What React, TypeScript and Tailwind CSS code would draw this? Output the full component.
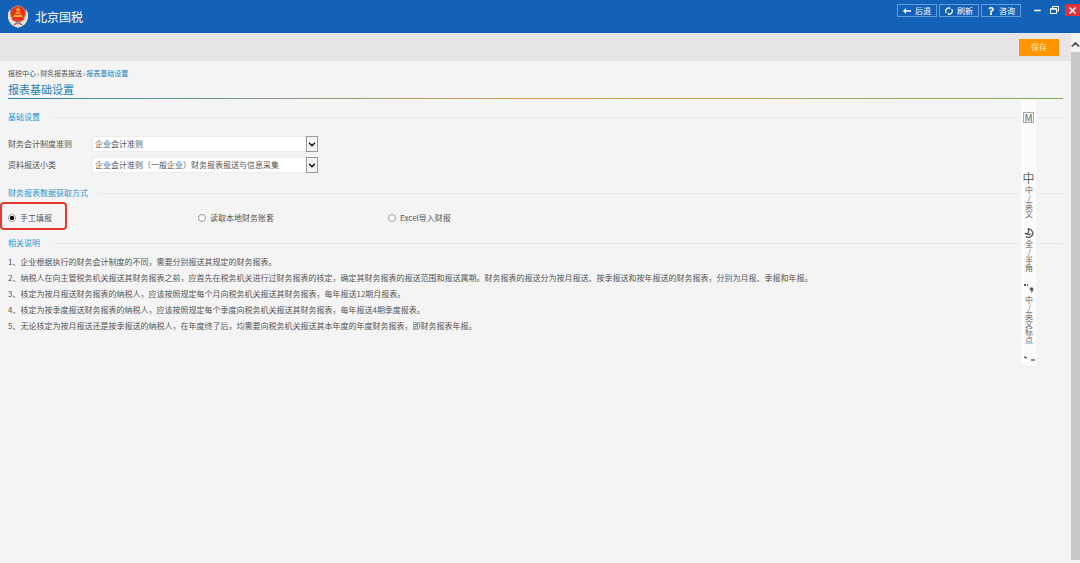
import type { ReactNode } from "react";
import { FaQuestion } from "react-icons/fa";
import { FiChevronDown, FiChevronUp, FiX } from "react-icons/fi";
import { LuMinus } from "react-icons/lu";

const notes = [
  "1、企业根据执行的财务会计制度的不同，需要分别报送其规定的财务报表。",
  "2、纳税人在向主管税务机关报送其财务报表之前，应首先在税务机关进行过财务报表的核定，确定其财务报表的报送范围和报送属期。财务报表的报送分为按月报送、按季报送和按年报送的财务报表，分别为月报、季报和年报。",
  "3、核定为按月报送财务报表的纳税人，应该按照规定每个月向税务机关报送其财务报表，每年报送12期月报表。",
  "4、核定为按季度报送财务报表的纳税人，应该按照规定每个季度向税务机关报送其财务报表，每年报送4期季度报表。",
  "5、无论核定为按月报送还是按季报送的纳税人，在年度终了后，均需要向税务机关报送其本年度的年度财务报表，即财务报表年报。",
];

function Emblem() {
  return (
    <svg viewBox="0 0 22 24" className="h-6 w-[22px]">
      <path d="M3 4C0 9 0 16 5 20l6 3 6-3c5-4 5-11 2-16-2 10-4 12-8 12S4 13 3 4z" fill="#d9cdb8" />
      <path d="M2 7c-1 6 1 10 5 12M20 7c1 6-1 10-5 12M4 18l4 3h6l4-3" fill="none" stroke="#f4eee4" strokeWidth="1.2" />
      <circle cx="11" cy="8.5" r="7.6" fill="#e8301c" stroke="#c9a27a" strokeWidth="0.8" />
      <path d="M11 2l.8 1.700 1.900.2-1.400 1.200.4 1.800L11 6l-1.700.9.4-1.800-1.400-1.200 1.900-.2zM6 12h10l-1-2H7zM8 9h6l-1-1.500H9z" fill="#ffb02e" />
      <path d="M4 14l4 3h6l4-3-1 5-4 3H9l-4-3z" fill="#e9e0d2" />
      <path d="M5 14l6 3 6-3M7 20l4-3 4 3" fill="none" stroke="#d8402c" strokeWidth="1.4" />
      <circle cx="11" cy="18" r="1.6" fill="#7f93b8" />
    </svg>
  );
}

function BackIcon() {
  return (
    <svg viewBox="0 0 8 8" className="h-2 w-2" fill="currentColor">
      <path d="M0 4l3-3v2.200h5v1.600H3V7z" />
    </svg>
  );
}

function RefreshIcon() {
  return (
    <svg viewBox="0 0 8 8" className="h-2 w-2" fill="none" stroke="currentColor" strokeWidth="1.2">
      <path d="M1.400 5.800A3 3 0 0 1 4.800 1.100M6.600 2.200A3 3 0 0 1 3.200 6.900" />
      <path d="M4 0l1.600 1.300L4.300 2.600zM4 8L2.400 6.700l1.300-1.300z" fill="currentColor" stroke="none" />
    </svg>
  );
}

function HeaderButton({ icon, label }: { icon: ReactNode; label: string }) {
  return (
    <button className="flex h-[13px] w-10 items-center justify-center gap-1 border border-[#5f9ce0] text-[8px] leading-none">
      {icon}
      {label}
    </button>
  );
}

function SectionTitle({ title }: { title: string }) {
  return (
    <div className="flex h-3 items-center gap-3">
      <h2 className="text-[8px] text-[#2b94d2]">{title}</h2>
      <div className="h-px flex-1 bg-[#e8e9ea]" />
    </div>
  );
}

function SelectRow({ id, label, value }: { id: string; label: string; value: string }) {
  return (
    <div className="flex h-4 items-center">
      <label htmlFor={id} className="w-[84px]">{label}</label>
      <div className="relative h-4 w-[226px]">
        <select id={id} className="h-4 w-full appearance-none border border-[#ececec] bg-white pl-0.5 text-[8px] text-[#555]">
          <option>{value}</option>
        </select>
        <span className="pointer-events-none absolute right-0 top-0 flex h-4 w-3 items-center justify-center border border-[#999] bg-[#f4f4f4] text-black">
          <FiChevronDown size={11} strokeWidth={3} />
        </span>
      </div>
    </div>
  );
}

function RadioOption({ label, checked }: { label: string; checked?: boolean }) {
  return (
    <label className="flex w-[190px] items-center gap-1">
      <input
        type="radio"
        name="source"
        defaultChecked={checked}
        className="size-2 appearance-none rounded-full border border-[#999] bg-white checked:bg-[radial-gradient(circle,#000_45%,#fff_55%)]"
      />
      {label}
    </label>
  );
}

function InputBar() {
  return (
    <div className="absolute right-11 top-[100px] flex h-[265px] w-[15px] flex-col items-center overflow-hidden bg-[#fcfcfc] text-[8px] leading-2 text-[#666]">
      <span className="mt-3 flex size-[11px] items-center justify-center border border-[#aaa] text-[10px]">M</span>
      <span className="mt-[49px] text-xs leading-3">中</span>
      <span className="mt-0.5 [writing-mode:vertical-rl] [text-orientation:upright]">中/英文</span>
      <svg viewBox="0 0 10 10" className="mt-2.5 size-[10px] shrink-0" fill="none" stroke="#555" strokeWidth="1.3">
        <path d="M4 .5C9 2 10.500 6 7 8.500 5 9.700 3 9.300 2 8.500M4 .5c1 2.500 1 4-.5 5.500L.8 5.500M3.500 6c1 1 2.500.8 3.200-.5" />
      </svg>
      <span className="mt-0.5 [writing-mode:vertical-rl] [text-orientation:upright]">全/半角</span>
      <svg viewBox="0 0 10 10" className="mt-3 size-[10px] shrink-0" fill="#555">
        <path d="M0 0h2v2H0zM3 0h1v2H3z" />
        <circle cx="7.500" cy="5" r="1.800" />
        <path d="M9.300 5c0 2-1 3.500-3 4 1-1 1.500-2 1.500-3z" />
      </svg>
      <span className="mt-0.5 [writing-mode:vertical-rl] [text-orientation:upright]">中/英文标点</span>
      <svg viewBox="0 0 12 6" className="mt-3 h-1.5 w-3 shrink-0" stroke="#666" strokeWidth="1.500">
        <path d="M1 1l3 1M8 4h4" />
      </svg>
    </div>
  );
}

export default function App() {
  return (
    <div className="relative flex min-h-screen flex-col bg-[#f4f4f4] font-['Noto_Sans_CJK_SC',sans-serif] text-[8px] text-[#555]">
      <header className="flex h-[33px] items-start justify-between bg-[#1462b8] text-white">
        <div className="flex h-[33px] items-center gap-1.5 pl-[7px]">
          <Emblem />
          <h1 className="text-xs">北京国税</h1>
        </div>
        <div className="flex items-start gap-0.5">
          <nav className="mt-1 mr-2 flex gap-0.5">
            <HeaderButton icon={<BackIcon />} label="后退" />
            <HeaderButton icon={<RefreshIcon />} label="刷新" />
            <HeaderButton icon={<FaQuestion size={8} />} label="咨询" />
          </nav>
          <button aria-label="最小化" className="mt-1 flex h-3 w-3 items-center justify-center">
            <LuMinus size={9} strokeWidth={4} />
          </button>
          <button aria-label="还原" className="mt-1 flex h-3 w-[18px] items-center justify-center">
            <svg viewBox="0 0 9 8" className="h-2 w-[9px]" fill="none" stroke="currentColor">
              <path d="M2.500 2.500v-2h6v4.500h-2M.5 2.500h6v5h-6zM.5 3.200h6" />
            </svg>
          </button>
          <button aria-label="关闭" className="mt-1 flex h-3 w-[15px] items-center justify-center bg-[#e0303c]">
            <FiX size={11} strokeWidth={3} />
          </button>
        </div>
      </header>

      <div className="flex flex-1">
        <div className="flex-1">
          <div className="flex h-[28px] items-center justify-end bg-[#e8e5e6] pr-3">
            <button className="h-[17px] w-10 bg-[#ff9500] text-[8px] leading-none text-[#ffe9c8]">保存</button>
          </div>
          <main className="px-2">
            <nav className="flex h-6 items-center gap-px text-[7px]">
              <a href="#">报税中心</a>
              <span>›</span>
              <a href="#">财务报表报送</a>
              <span>›</span>
              <a href="#" className="text-[#2280b8]">报表基础设置</a>
            </nav>
            <h2 className="h-[13px] text-[11px] leading-[8px] text-[#2280b8]">报表基础设置</h2>
            <div className="h-px bg-linear-to-r from-[#1d86b0] via-[#d0a048] to-[#7fae5a]" />

            <div className="pt-3">
              <SectionTitle title="基础设置" />
            </div>
            <div className="flex flex-col gap-[5px] pt-[13px]">
              <SelectRow id="rule" label="财务会计制度准则" value="企业会计准则" />
              <SelectRow id="kind" label="资料报送小类" value="企业会计准则（一般企业）财务报表报送与信息采集" />
            </div>

            <div className="pt-[14px]">
              <SectionTitle title="财务报表数据获取方式" />
            </div>
            <div className="relative flex h-[38px] items-center">
              <div className="pointer-events-none absolute -left-2 top-[3px] h-7 w-[67px] rounded-sm border-2 border-[#e5392f]" />
              <RadioOption label="手工填报" checked />
              <RadioOption label="读取本地财务账套" />
              <RadioOption label="Excel导入财报" />
            </div>

            <SectionTitle title="相关说明" />
            <div className="pt-[5px] leading-4">
              {notes.map((note) => (
                <p key={note}>{note}</p>
              ))}
            </div>
          </main>
        </div>
        <div className="flex w-[9px] flex-col bg-[#c9c9c9]">
          <div className="flex h-[19px] items-center justify-center bg-[#f4f4f4] pt-1">
            <FiChevronUp size={13} strokeWidth={3} className="shrink-0" />
          </div>
          <div className="mt-auto h-[3px] bg-[#f4f4f4]" />
        </div>
      </div>
      <InputBar />
    </div>
  );
}
